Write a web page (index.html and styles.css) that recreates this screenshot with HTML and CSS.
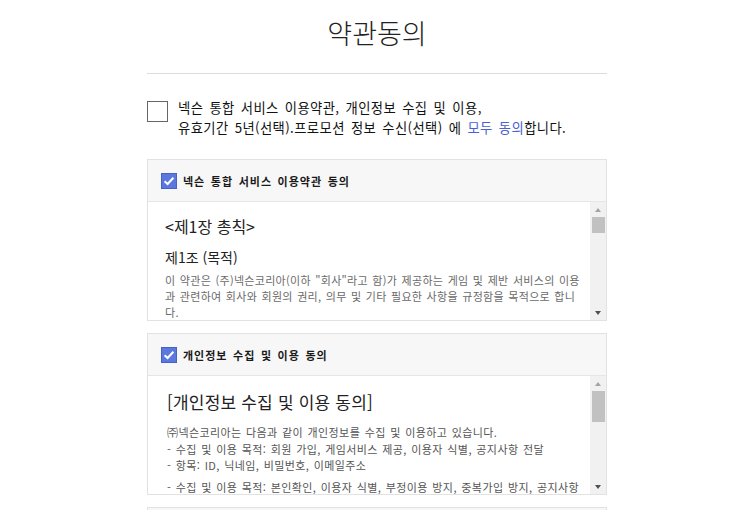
FILE: index.html
```html
<!DOCTYPE html>
<html lang="ko">
<head>
<meta charset="utf-8">
<title>약관동의</title>
<link rel="stylesheet" href="styles.css">
</head>
<body>
<div class="page">
  <header class="head">
    <h1 class="title">약관동의</h1>
  </header>

  <div class="all-agree">
    <span class="box-empty"></span>
    <p class="all-text">넥슨 통합 서비스 이용약관, 개인정보 수집 및 이용,<br>유효기간 5년(선택).프로모션 정보 수신(선택) 에 <span class="link">모두 동의</span>합니다.</p>
  </div>

  <section class="terms">
    <div class="terms-head">
      <svg class="check" width="16" height="16" viewBox="0 0 16 16"><rect x="0.5" y="0.5" width="15" height="15" fill="#5b78df" stroke="#4761c4"/><path d="M3.6 8.2 L6.6 11 L12.4 4.8" fill="none" stroke="#fff" stroke-width="2"/></svg>
      <span class="terms-label">넥슨 통합 서비스 이용약관 동의</span>
    </div>
    <div class="terms-body">
      <div class="terms-text">
        <h2 class="chapter">&lt;제1장 총칙&gt;</h2>
        <h3 class="article">제1조 (목적)</h3>
        <p class="para">이 약관은 (주)넥슨코리아(이하 "회사"라고 함)가 제공하는 게임 및 제반 서비스의 이용과 관련하여 회사와 회원의 권리, 의무 및 기타 필요한 사항을 규정함을 목적으로 합니다.</p>
      </div>
      <div class="sbar">
        <span class="arr up"></span>
        <span class="track"><span class="thumb thumb-sm"></span></span>
        <span class="arr down"></span>
      </div>
    </div>
  </section>

  <section class="terms">
    <div class="terms-head">
      <svg class="check" width="16" height="16" viewBox="0 0 16 16"><rect x="0.5" y="0.5" width="15" height="15" fill="#5b78df" stroke="#4761c4"/><path d="M3.6 8.2 L6.6 11 L12.4 4.8" fill="none" stroke="#fff" stroke-width="2"/></svg>
      <span class="terms-label">개인정보 수집 및 이용 동의</span>
    </div>
    <div class="terms-body">
      <div class="terms-text text2">
        <h2 class="chapter2">[개인정보 수집 및 이용 동의]</h2>
        <p class="para2">㈜넥슨코리아는 다음과 같이 개인정보를 수집 및 이용하고 있습니다.<br>- 수집 및 이용 목적: 회원 가입, 게임서비스 제공, 이용자 식별, 공지사항 전달<br>- 항목: ID, 닉네임, 비밀번호, 이메일주소</p>
        <p class="para2">- 수집 및 이용 목적: 본인확인, 이용자 식별, 부정이용 방지, 중복가입 방지, 공지사항</p>
      </div>
      <div class="sbar">
        <span class="arr up"></span>
        <span class="track"><span class="thumb thumb-lg"></span></span>
        <span class="arr down"></span>
      </div>
    </div>
  </section>

  <section class="terms">
    <div class="terms-head"></div>
  </section>
</div>
</body>
</html>
```

FILE: styles.css
```css
* { box-sizing: border-box; }
html, body { margin: 0; padding: 0; background: #fff; }
body {
  padding-left: 14px;
  font-family: "Noto Sans CJK KR", "Noto Sans", sans-serif;
  color: #222;
}
.page { width: 460px; margin: 0 auto; }

.head {
  height: 74px;
  border-bottom: 1px solid #dcdcdc;
  padding-top: 14px;
}
.title {
  margin: 0;
  text-align: center;
  font-size: 27px;
  font-weight: 300;
  line-height: 38px;
  color: #222;
}

.all-agree {
  display: flex;
  align-items: flex-start;
  margin-top: 24px;
  margin-bottom: 21px;
}
.box-empty {
  flex: none;
  width: 21px;
  height: 21px;
  border: 1px solid #666;
  margin-top: 3px;
  margin-right: 10px;
}
.all-text {
  margin: 0;
  font-size: 13.3px;
  line-height: 20px;
  color: #111;
  letter-spacing: 0.4px;
  word-spacing: 2px;
}
.link { color: #4a5fd6; }

.terms {
  border: 1px solid #e2e2e2;
  margin-bottom: 12px;
}
.terms-head {
  height: 42px;
  background: #f7f7f7;
  border-bottom: 1px solid #e6e6e6;
  display: flex;
  align-items: center;
  padding-left: 13px;
}
.check { flex: none; display: block; margin-right: 6px; }
.terms-label {
  font-size: 11px;
  font-weight: 700;
  letter-spacing: 1px;
  word-spacing: 1.5px;
  color: #1a1a1a;
}

.terms-body {
  display: flex;
  height: 118px;
  background: #fff;
}
.terms-text {
  flex: 1;
  overflow: hidden;
  padding: 12px 4px 0 17px;
}
.chapter {
  margin: 0;
  font-size: 16px;
  font-weight: 400;
  line-height: 24px;
  color: #222;
}
.article {
  margin: 9px 0 0;
  font-size: 14px;
  font-weight: 400;
  line-height: 20px;
  color: #222;
}
.para {
  margin: 5px 0 0;
  font-size: 11px;
  line-height: 16px;
  color: #6a6a6a;
  letter-spacing: 0.3px;
  word-spacing: 1px;
}
.text2 { padding-left: 19px; padding-top: 14px; }
.chapter2 {
  margin: 0;
  font-size: 17px;
  font-weight: 400;
  line-height: 24px;
  color: #222;
  letter-spacing: 0.2px;
}
.para2 {
  margin: 10px 0 0;
  font-size: 11px;
  line-height: 16.5px;
  color: #555;
  letter-spacing: 0.4px;
  word-spacing: 1px;
}
.para2 + .para2 { margin-top: 5px; }

.sbar {
  flex: none;
  width: 16px;
  background: #f1f1f1;
  display: flex;
  flex-direction: column;
}
.arr {
  flex: none;
  height: 15px;
  display: flex;
  align-items: center;
  justify-content: center;
}
.arr::before {
  content: "";
  width: 0;
  height: 0;
  border-left: 3.5px solid transparent;
  border-right: 3.5px solid transparent;
}
.up::before { border-bottom: 4px solid #a3a3a3; }
.down::before { border-top: 4px solid #505050; }
.track { flex: 1; padding: 0 1px 0 2px; }
.thumb { display: block; background: #c1c1c1; }
.thumb-sm { height: 16px; }
.thumb-lg { height: 31px; }
```
